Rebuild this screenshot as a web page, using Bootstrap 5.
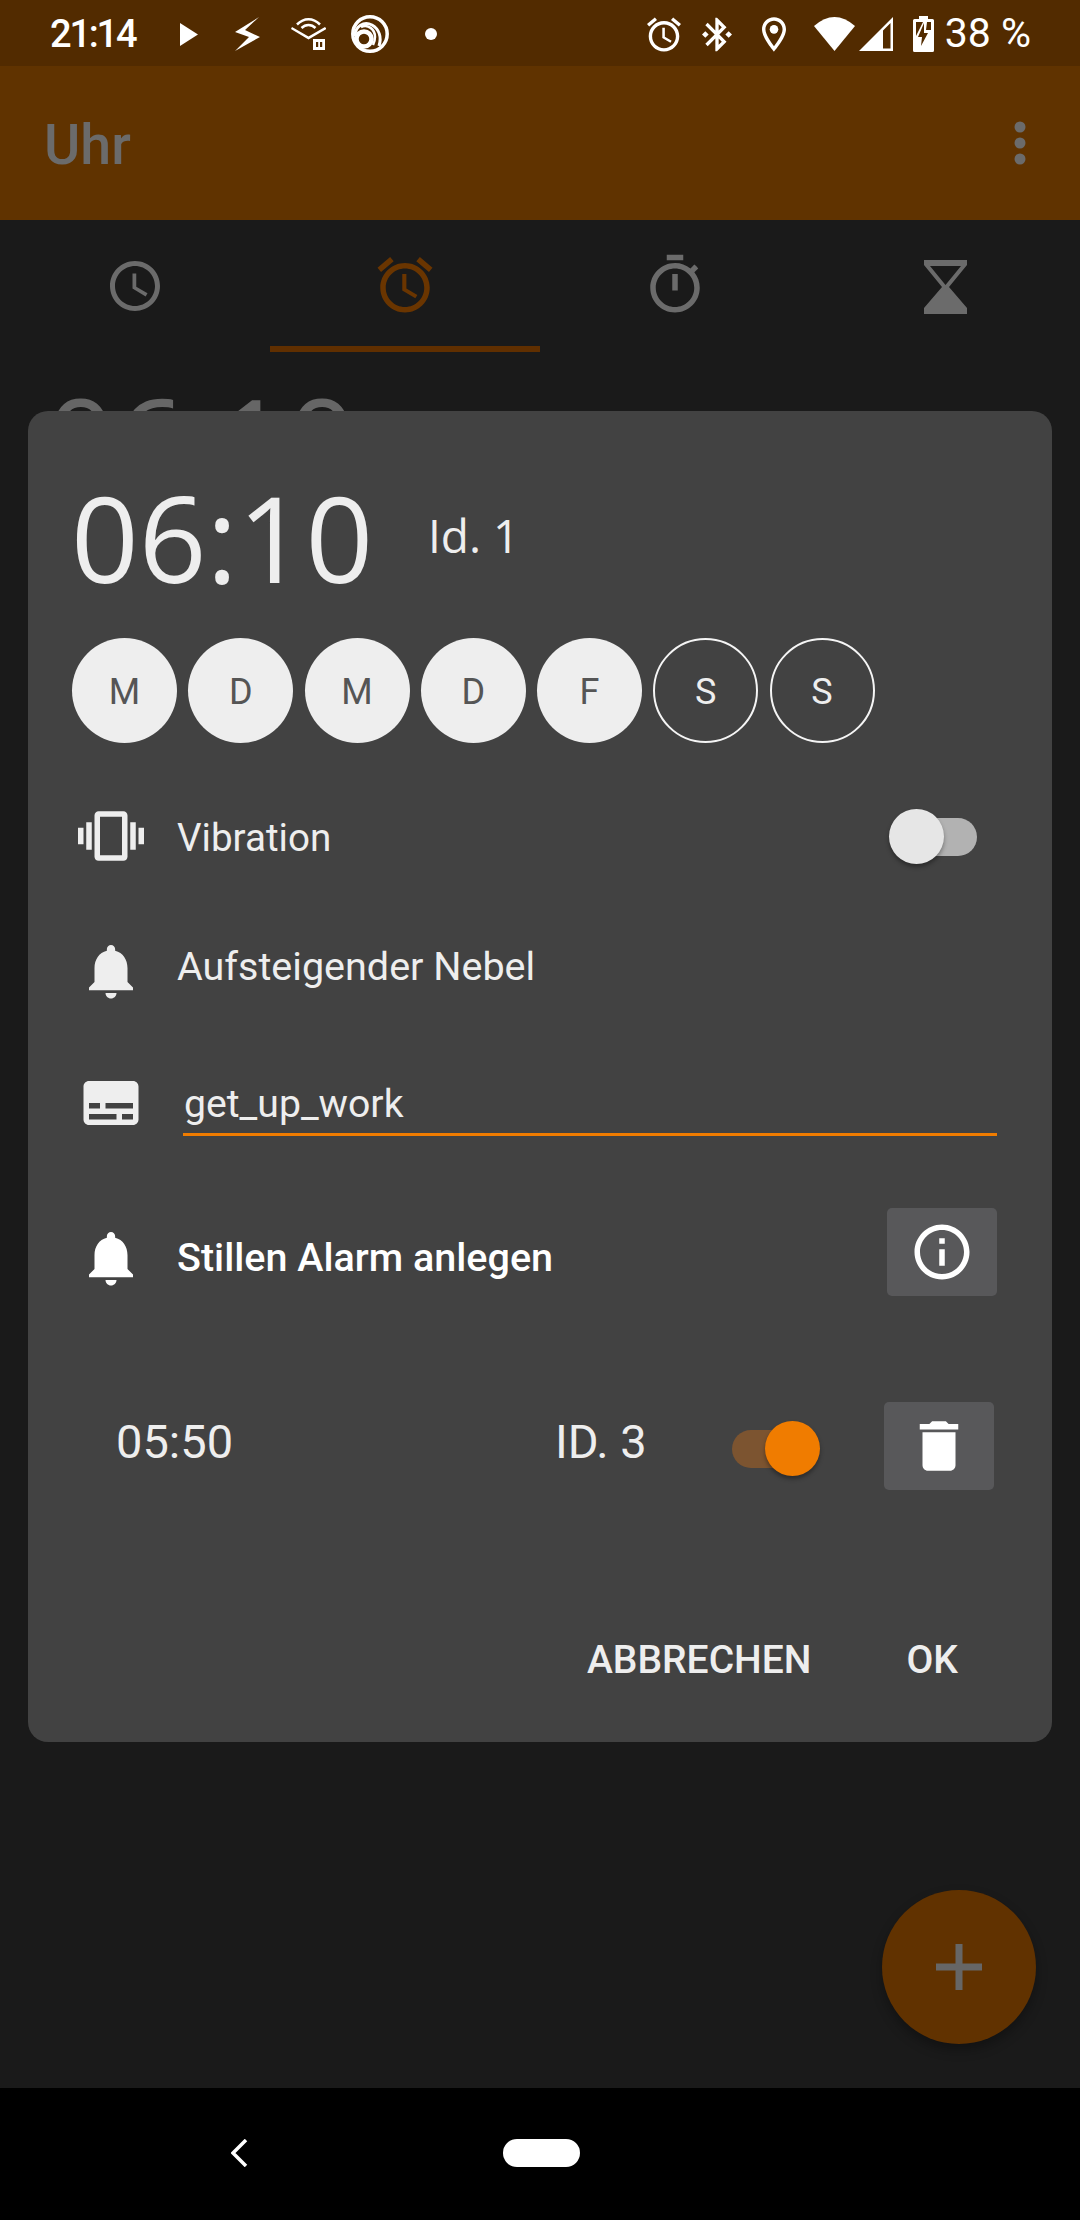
<!DOCTYPE html>
<html lang="de">

<head>
    <meta charset="UTF-8">
    <meta name="viewport" content="width=device-width, initial-scale=1.0">
    <title>Uhr</title>
    <link rel="stylesheet" href="https://cdn.jsdelivr.net/npm/bootstrap@5.3.0/dist/css/bootstrap.min.css">
    <style>
        html, body { margin: 0; background: #1a1a1a; }
        body { width: 1080px; height: 2220px; overflow: hidden; font-family: Roboto, "Liberation Sans", sans-serif; color: #eee; position: relative; }
        svg { display: block; fill: currentColor; flex: none; }

        /* status bar */
        .status-bar { height: 66px; background: #522b00; color: #fff; padding: 2px 49px 0 50px; }
        .sb-time { width: 130px; font-weight: 500; font-size: 38px; letter-spacing: -2.200px; }
        .si-bolt { margin-left: 36px; }
        .si-audio { margin-left: 31px; }
        .si-ring { margin-left: 25px; }
        .si-dot { margin-left: 36px; }
        .si-bt { margin-left: 21px; }
        .si-loc { margin-left: 30px; }
        .si-wifi { margin-left: 28px; }
        .si-signal { margin-left: 4px; }
        .si-batt { margin-left: 20px; }
        .sb-pct { margin-left: 11px; font-size: 41px; }

        /* dimmed app behind the dialog */
        .app-bar { height: 154px; background: #603300; color: #6b6b6b; padding: 0 0 0 44px; }
        .app-title { font-size: 55.500px; font-weight: 500; padding-top: 6px; }
        .app-menu { margin-right: 49px; }
        .tab-strip { height: 132px; }
        .tab-item { flex: 1 1 0; height: 132px; color: #6b6b6b; border-bottom: 6px solid transparent; padding-top: 32px; }
        .tab-item.on { color: #6a3500; border-bottom-color: #602f00; }
        .bg-clock { height: 59px; overflow: hidden; font-family: "Open Sans", "Noto Sans", sans-serif; font-size: 122px; line-height: 1; color: #666; padding: 28px 0 0 46px; }
        .app-body { flex: 1 1 auto; overflow: hidden; }

        /* dialog */
        .alarm-dialog { position: absolute; left: 28px; top: 411px; width: 1024px; height: 1331px; background: #424242; border-radius: 20px; padding-top: 59px; }
        .dlg-head { height: 136px; padding-left: 43px; font-family: "Open Sans", "Noto Sans", sans-serif; color: #eee; }
        .dlg-time { font-size: 118.500px; line-height: 1; width: 357px; margin-top: -2px; }
        .dlg-id { font-size: 46px; margin-top: -6px; }
        .day-row { margin-top: 32px; padding-left: 44px; gap: 11.250px; }
        .day-btn { width: 105px; height: 105px; padding: 3px 0 0; border-radius: 50%; font-size: 36px; background: #eee; color: #555; border: 0; line-height: 1; }
        .day-btn.off { background: transparent; color: #eee; border: 2.500px solid #f5f5f5; }
        .opt-row { height: 100px; padding: 0 55px 0 50px; font-size: 39.500px; }
        .opt-icon { width: 66px; margin-right: 33px; }
        .opt-vib { margin-top: 43px; }
        .opt-tone { margin-top: 30px; }
        .opt-name { margin-top: 37px; }
        .opt-silent { margin-top: 49px; font-weight: 500; color: #fff; }
        .vib-label { font-size: 38.600px; margin-top: 4px; }
        .tone-label { margin-top: 2px; }
        .bell-low { margin-top: 10px; }
        .bell-silent { margin-top: 12px; }
        .silent-label { margin-top: 12px; }
        .name-input { height: 66px; margin-left: 6px; padding: 4px 0 0 1px; background: transparent; border: 0; border-bottom: 3px solid #f07c00; border-radius: 0; color: #eee; font-size: 39.200px; }
        .name-input:focus { background: transparent; color: #eee; box-shadow: none; border-color: #f07c00; }
        .square-btn { width: 110px; height: 88px; padding: 0; background: #58585a; border: 0; border-radius: 5px; color: #fff; }
        .silent-row { height: 100px; margin-top: 94px; font-size: 47px; padding-left: 88px; }
        .silent-time { width: 439px; margin-top: -8px; }
        .silent-id { width: 177px; margin-top: -8px; }
        .silent-btn { margin-left: 64px; }
        .dlg-foot { height: 100px; margin-top: 114px; padding-right: 69px; gap: 45px; }
        .text-action { padding: 0 25px; font-size: 39px; font-weight: 500; color: #eee; border: 0; background: transparent; }

        /* switches */
        .toggle { position: relative; width: 88px; height: 55px; flex: none; }
        .toggle-track { position: absolute; top: 9px; height: 38px; width: 78px; border-radius: 19px; }
        .toggle-thumb { position: absolute; top: 0; width: 55px; height: 55px; border-radius: 50%; box-shadow: 0 3px 4px rgba(0, 0, 0, .35); }
        .toggle.is-off { margin-right: 20px; }
        .toggle.is-on { margin-top: 4px; }
        .is-off .toggle-track { right: 0; background: #b2b2b2; }
        .is-off .toggle-thumb { left: 0; background: #e6e6e6; }
        .is-on .toggle-track { left: 0; background: #7c5430; }
        .is-on .toggle-thumb { right: 0; background: #f07c00; }

        /* fab + nav */
        .fab-add { position: absolute; left: 882px; top: 1890px; width: 154px; height: 154px; border-radius: 50%; background: #613200; color: #666; padding: 0; border: 0; box-shadow: 0 6px 12px rgba(0, 0, 0, .3); }
        .sys-nav { height: 132px; background: #000; color: #fff; flex: none; padding-left: 231px; padding-bottom: 2px; }
        .nav-pill { width: 77px; height: 28px; background: #fff; border-radius: 14px; margin-left: 255px; }
    </style>
</head>

<body class="d-flex flex-column">

    <!-- Status bar -->
    <div class="status-bar d-flex align-items-center">
        <span class="sb-time">21:14</span>
        <svg width="18" height="23" viewBox="0 0 18 23"><path d="M0 0l18 11.500L0 23z"/></svg>
        <svg class="si-bolt" width="26" height="34" viewBox="0 0 26 34"><path d="M25 0L1 15l14 5L1 34l25-14-15-7z"/></svg>
        <svg class="si-audio" width="35" height="34" viewBox="0 0 35 34"><path d="M1 10l16.500 9.500L34 10l1.500 2-18 10.500L0 12z"/><path d="M6 7.500C13 .5 22 .5 29 7.500M10.500 11c4-4 10-4 14 0" fill="none" stroke="currentColor" stroke-width="2.500"/><path d="M22 22h12v11H22z"/><path d="M25 25h2.200v5H25zM29 25h2.200v5H29z" fill="#522b00"/></svg>
        <svg class="si-ring" width="38" height="38" viewBox="0 0 38 38" fill="none"><g fill="none" stroke="currentColor"><circle cx="19" cy="19" r="17.200" stroke-width="3.500"/><circle cx="13" cy="24" r="7.500" stroke-width="4.500"/><path d="M4 21C4 11 13 6 21 10c7 4 10 12 7 21" stroke-width="3"/><path d="M10 12c7-3 14 2 14 10 0 3-1 6-2 8" stroke-width="2.500"/></g></svg>
        <svg class="si-dot" width="12" height="12" viewBox="0 0 12 12"><circle cx="6" cy="6" r="6"/></svg>

        <svg class="ms-auto" width="34" height="35" viewBox="2 1.860 20 20.140"><path d="M22 5.720l-4.600-3.860-1.290 1.530 4.600 3.860L22 5.720zM7.880 3.390L6.600 1.860 2 5.710l1.290 1.530 4.590-3.850zM12.500 8H11v6l4.750 2.850.75-1.230-4-2.370V8zM12 4c-4.970 0-9 4.030-9 9s4.030 9 9 9 9-4.030 9-9-4.030-9-9-9zm0 16c-3.870 0-7-3.130-7-7s3.130-7 7-7 7 3.130 7 7-3.130 7-7 7z"/></svg>
        <svg class="si-bt" width="30" height="35" viewBox="3 2 18 20"><path d="M7 12l-2-2-2 2 2 2 2-2zm10.710-4.290L12 2h-1v7.590L6.410 5 5 6.410 10.590 12 5 17.590 6.410 19 11 14.410V22h1l5.710-5.710-4.300-4.290 4.300-4.290zM13 5.830l1.880 1.880L13 9.590V5.830zm1.880 10.460L13 18.170v-3.760l1.880 1.880zM19 10l-2 2 2 2 2-2-2-2z"/></svg>
        <svg class="si-loc" width="24" height="35" viewBox="5 2 14 20"><path d="M12 2C8.130 2 5 5.130 5 9c0 5.250 7 13 7 13s7-7.750 7-13c0-3.870-3.130-7-7-7zM7 9c0-2.760 2.240-5 5-5s5 2.240 5 5c0 2.880-2.880 7.190-5 9.880C9.920 16.210 7 11.850 7 9z"/><circle cx="12" cy="9" r="2.500"/></svg>
        <svg class="si-wifi" width="41" height="34" viewBox="0 0 41 34"><path d="M0 9Q20.500-9 41 9L20.500 34z"/></svg>
        <svg class="si-signal" width="34" height="34" viewBox="0 0 34 34"><path fill-rule="evenodd" d="M34 0v34H0zM31.500 6L24 13.500v18h7.500z"/></svg>
        <svg class="si-batt" width="21" height="36" viewBox="0 0 21 36"><path fill-rule="evenodd" d="M6 0h9v3h4.500q1.500 0 1.500 1.500V34.500q0 1.500-1.500 1.500H1.500Q0 36 0 34.500V4.500Q0 3 1.500 3H6zM3 6v14l7-14zM14 6l-1 8h5V6z"/><path d="M11 7L5 21h4l-1 9 7-13h-4z" fill="#522b00"/></svg>
        <span class="sb-pct">38 %</span>
    </div>

    <!-- Toolbar -->
    <div class="app-bar d-flex align-items-center justify-content-between">
        <span class="app-title">Uhr</span>
        <svg class="app-menu" width="22" height="44" viewBox="0 0 22 44"><circle cx="11" cy="6" r="5.500"/><circle cx="11" cy="22" r="5.500"/><circle cx="11" cy="38" r="5.500"/></svg>
    </div>

    <!-- Tabs -->
    <div class="tab-strip d-flex">
        <div class="tab-item d-flex justify-content-center">
            <svg width="60" height="60" viewBox="0 0 24 24" class="mt-1"><path d="M11.990 2C6.470 2 2 6.480 2 12s4.470 10 9.990 10C17.520 22 22 17.520 22 12S17.520 2 11.990 2zM12 20c-4.420 0-8-3.580-8-8s3.580-8 8-8 8 3.580 8 8-3.580 8-8 8zm.500-13H11v6l5.250 3.150.750-1.230-4.500-2.670z"/></svg>
        </div>
        <div class="tab-item on d-flex justify-content-center">
            <svg width="66" height="66" viewBox="0 0 24 24"><path d="M22 5.720l-4.600-3.860-1.290 1.530 4.600 3.860L22 5.720zM7.880 3.390L6.600 1.860 2 5.710l1.290 1.530 4.590-3.850zM12.500 8H11v6l4.750 2.850.75-1.230-4-2.370V8zM12 4c-4.970 0-9 4.030-9 9s4.030 9 9 9 9-4.030 9-9-4.030-9-9-9zm0 16c-3.870 0-7-3.130-7-7s3.130-7 7-7 7 3.130 7 7-3.130 7-7 7z"/></svg>
        </div>
        <div class="tab-item d-flex justify-content-center">
            <svg width="66" height="66" viewBox="0 0 24 24"><path d="M15 1H9v2h6V1zm-4 13h2V8h-2v6zm8.030-6.610l1.420-1.420c-.43-.51-.9-.99-1.410-1.410l-1.420 1.420C16.070 4.740 14.120 4 12 4c-4.970 0-9 4.030-9 9s4.020 9 9 9 9-4.030 9-9c0-2.120-.74-4.070-1.970-5.610zM12 20c-3.870 0-7-3.130-7-7s3.130-7 7-7 7 3.130 7 7-3.130 7-7 7z"/></svg>
        </div>
        <div class="tab-item d-flex justify-content-center">
            <svg width="43" height="54" viewBox="0 0 43 54" class="mt-2"><path fill-rule="evenodd" d="M0 0h43v5L25 27l18 21v6H0v-6l18-21L0 5zM6 6l15.500 19L37 6z"/></svg>
        </div>
    </div>

    <div class="app-body">
        <div class="bg-clock">06:10</div>
    </div>

    <!-- Nav bar -->
    <div class="sys-nav d-flex align-items-center">
        <svg width="17" height="28" viewBox="0 0 17 28"><path d="M15 1L2 14l13 13" fill="none" stroke="currentColor" stroke-width="3.500"/></svg>
        <div class="nav-pill"></div>
    </div>

    <button class="fab-add d-flex align-items-center justify-content-center" type="button" aria-label="Neu">
        <svg width="46" height="46" viewBox="0 0 46 46"><path d="M19.500 0h7v19.500H46v7H26.500V46h-7V26.500H0v-7h19.500z"/></svg>
    </button>

    <!-- Dialog -->
    <div class="alarm-dialog d-flex flex-column">
        <div class="dlg-head d-flex align-items-center">
            <span class="dlg-time">06:10</span>
            <span class="dlg-id">Id. 1</span>
        </div>

        <div class="day-row d-flex">
            <button class="btn day-btn" type="button">M</button>
            <button class="btn day-btn" type="button">D</button>
            <button class="btn day-btn" type="button">M</button>
            <button class="btn day-btn" type="button">D</button>
            <button class="btn day-btn" type="button">F</button>
            <button class="btn day-btn off" type="button">S</button>
            <button class="btn day-btn off" type="button">S</button>
        </div>

        <div class="opt-row opt-vib d-flex align-items-center">
            <svg class="opt-icon" width="66" height="66" viewBox="0 0 24 24"><path d="M0 15h2V9H0v6zm3 2h2V7H3v10zm19-8v6h2V9h-2zm-3 8h2V7h-2v10zM16.500 3h-9C6.670 3 6 3.670 6 4.500v15c0 .83.67 1.500 1.500 1.500h9c.83 0 1.500-.67 1.500-1.500v-15c0-.83-.67-1.500-1.500-1.500zM16 19H8V5h8v14z"/></svg>
            <span class="vib-label">Vibration</span>
            <div class="toggle is-off ms-auto"><span class="toggle-track"></span><span class="toggle-thumb"></span></div>
        </div>

        <div class="opt-row opt-tone d-flex align-items-center">
            <svg class="opt-icon bell-low" width="66" height="66" viewBox="0 0 24 24"><path d="M12 22c1.100 0 2-.9 2-2h-4c0 1.100.89 2 2 2zm6-6v-5c0-3.070-1.640-5.640-4.500-6.320V4c0-.83-.67-1.500-1.500-1.500s-1.500.67-1.500 1.500v.68C7.630 5.360 6 7.920 6 11v5l-2 2v1h16v-1l-2-2z"/></svg>
            <span class="tone-label">Aufsteigender Nebel</span>
        </div>

        <div class="opt-row opt-name d-flex align-items-center">
            <svg class="opt-icon" width="66" height="66" viewBox="0 0 24 24"><path d="M20 4H4c-1.100 0-2 .9-2 2v12c0 1.100.9 2 2 2h16c1.100 0 2-.9 2-2V6c0-1.100-.9-2-2-2zM4 12h4v2H4v-2zm10 6H4v-2h10v2zm6 0h-4v-2h4v2zm0-4H10v-2h10v2z"/></svg>
            <input class="form-control name-input" type="text" value="get_up_work" aria-label="Name">
        </div>

        <div class="opt-row opt-silent d-flex align-items-center">
            <svg class="opt-icon bell-silent" width="66" height="66" viewBox="0 0 24 24"><path d="M12 22c1.100 0 2-.9 2-2h-4c0 1.100.89 2 2 2zm6-6v-5c0-3.070-1.640-5.640-4.500-6.320V4c0-.83-.67-1.500-1.500-1.500s-1.500.67-1.500 1.500v.68C7.630 5.360 6 7.920 6 11v5l-2 2v1h16v-1l-2-2z"/></svg>
            <span class="silent-label">Stillen Alarm anlegen</span>
            <button class="btn square-btn ms-auto d-flex align-items-center justify-content-center" type="button" aria-label="Info">
                <svg width="66" height="66" viewBox="0 0 24 24"><path d="M11 7h2v2h-2zm0 4h2v6h-2zm1-9C6.480 2 2 6.480 2 12s4.480 10 10 10 10-4.480 10-10S17.520 2 12 2zm0 18c-4.410 0-8-3.590-8-8s3.590-8 8-8 8 3.590 8 8-3.590 8-8 8z"/></svg>
            </button>
        </div>

        <div class="silent-row d-flex align-items-center">
            <span class="silent-time">05:50</span>
            <span class="silent-id">ID. 3</span>
            <div class="toggle is-on"><span class="toggle-track"></span><span class="toggle-thumb"></span></div>
            <button class="btn square-btn silent-btn d-flex align-items-center justify-content-center" type="button" aria-label="Löschen">
                <svg width="66" height="66" viewBox="0 0 24 24"><path d="M6 19c0 1.100.9 2 2 2h8c1.100 0 2-.9 2-2V7H6v12zM19 4h-3.500l-1-1h-5l-1 1H5v2h14V4z"/></svg>
            </button>
        </div>

        <div class="dlg-foot d-flex align-items-center justify-content-end">
            <button class="btn text-action" type="button">ABBRECHEN</button>
            <button class="btn text-action" type="button">OK</button>
        </div>
    </div>

    <script src="https://cdn.jsdelivr.net/npm/bootstrap@5.3.0/dist/js/bootstrap.bundle.min.js"></script>
</body>

</html>
